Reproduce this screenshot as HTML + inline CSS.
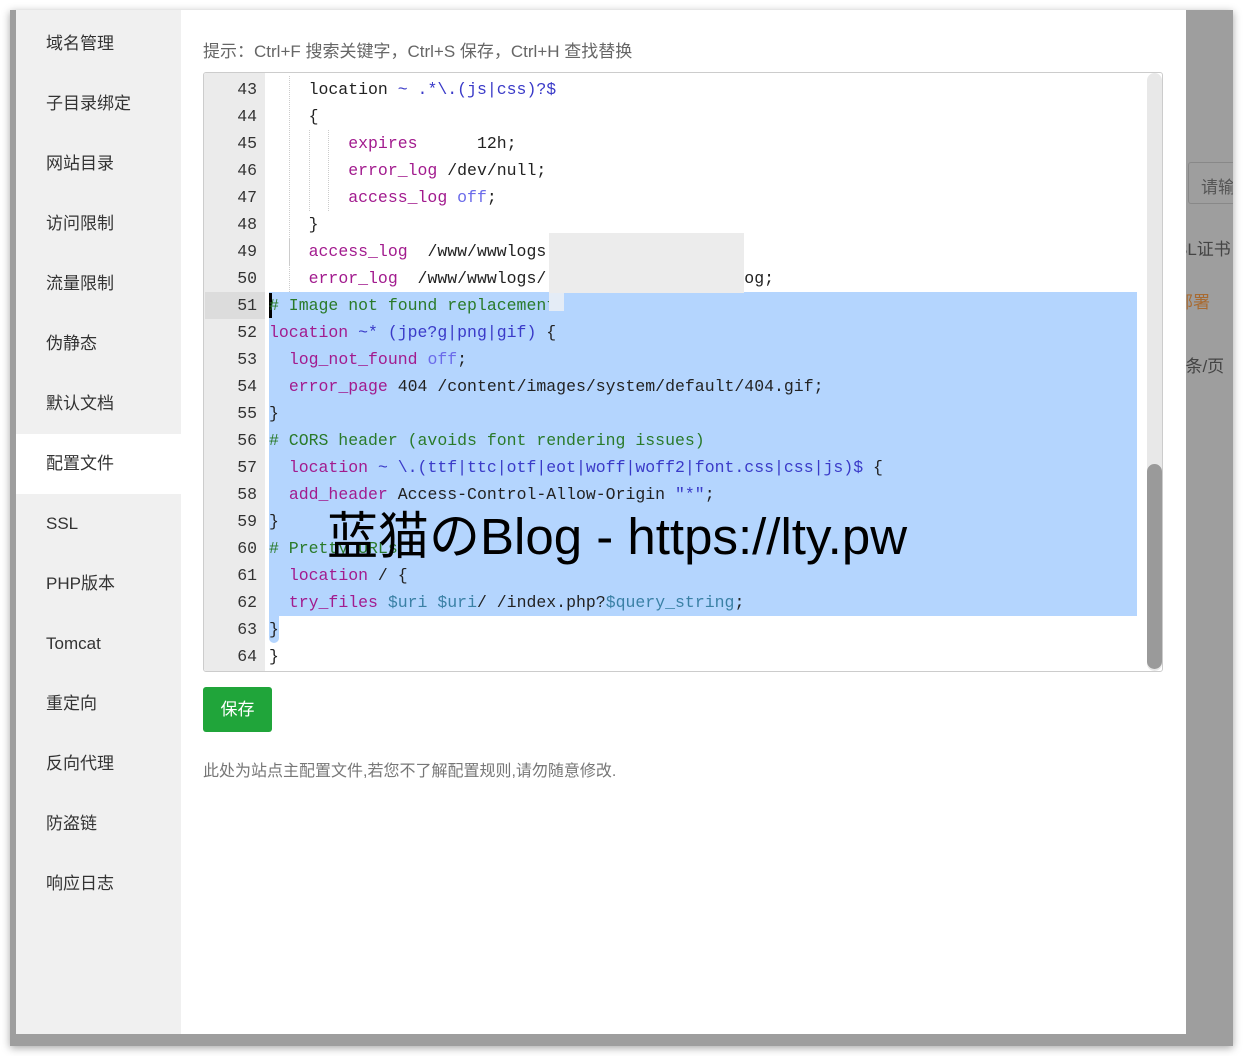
<!DOCTYPE html><html><head><meta charset="utf-8"><style>
*{margin:0;padding:0;box-sizing:border-box}
body{width:1243px;height:1056px;background:#fff;position:relative;overflow:hidden;font-family:"Liberation Sans","Noto Sans CJK SC",sans-serif}
.scr{position:absolute;left:10px;top:10px;width:1223px;height:1036px;background:#9e9e9e;box-shadow:0 2px 8px rgba(0,0,0,.35);overflow:hidden}
.dlg{position:absolute;left:16px;top:10px;width:1170px;height:1024px;background:#fff}
.side{position:absolute;left:0;top:0;width:165px;height:1024px;background:#f0f0f0;padding-top:4px}
.side div{height:60px;line-height:60px;padding-left:30px;font-size:17px;color:#333}
.side div.on{background:#fff}
.hint{position:absolute;left:203px;top:37px;font-size:17px;color:#666}
.ed{position:absolute;left:203px;top:72px;width:960px;height:600px;border:1px solid #ccc;border-radius:3px;overflow:hidden;background:#fff}
.gut{position:absolute;left:0;top:0;width:61px;height:100%;background:#ebebeb}
.ln{position:absolute;left:0;width:53px;text-align:right;font:16.5px/27px "Liberation Mono",monospace;color:#333}
.code{position:absolute;left:65px;top:3px;font:16.5px/27px "Liberation Mono",monospace;color:#222;white-space:pre}
.sel{position:absolute;left:65px;top:219px;width:868px;height:324px;background:#b4d5fe}
.k{color:#a21b8e}.b{color:#3a3ac8}.o{color:#6b6bea}.c{color:#2a7a2a}.v{color:#3a80a5}
.sb{position:absolute;left:943px;top:0;width:15px;height:598px;background:#e8e8e8;border-radius:8px}
.th{position:absolute;left:943px;top:391px;width:15px;height:205px;background:#9a9a9a;border-radius:8px}
.btn{position:absolute;left:203px;top:687px;width:69px;height:45px;background:#20a53a;border-radius:3px;color:#fff;font-size:17px;line-height:45px;text-align:center}
.note{position:absolute;left:203px;top:757px;font-size:16px;color:#777}
.wm{position:absolute;left:327px;top:495px;font-size:51px;color:#000;font-family:"Liberation Sans","Noto Sans CJK JP",sans-serif;white-space:nowrap}
.rt{position:absolute;color:#444;font-size:17px;white-space:nowrap}
</style></head><body>
<div class="scr">
<div class="rt" style="left:1178px;top:152px;width:60px;height:42px;border:1px solid #888;border-radius:3px;padding:10px 12px;color:#555">请输</div>
<div class="rt" style="left:1166px;top:225px">SL证书</div>
<div class="rt" style="left:1166px;top:278px;color:#a86a30">部署</div>
<div class="rt" style="left:1166px;top:342px">0条/页</div>
</div>
<div class="dlg">
<div class="side">
<div>域名管理</div><div>子目录绑定</div><div>网站目录</div><div>访问限制</div><div>流量限制</div><div>伪静态</div><div>默认文档</div><div class="on">配置文件</div><div>SSL</div><div>PHP版本</div><div>Tomcat</div><div>重定向</div><div>反向代理</div><div>防盗链</div><div>响应日志</div>
</div>
</div>
<div class="hint">提示：Ctrl+F 搜索关键字，Ctrl+S 保存，Ctrl+H 查找替换</div>
<div class="ed">
<div class="gut"></div>
<div style="position:absolute;left:1px;top:219px;width:60px;height:27px;background:#dcdcdc"></div>
<div class="sel"></div>
<div style="position:absolute;left:65px;top:543px;width:10px;height:27px;background:#b4d5fe;border-radius:0 0 5px 5px"></div>
<div style="position:absolute;left:65px;top:220px;width:3px;height:25px;background:#000"></div>
<div style="position:absolute;left:85px;top:3px;height:189px;border-left:1px dotted #ccc"></div>
<div style="position:absolute;left:85px;top:165px;height:54px;border-left:1px dotted #ccc"></div>
<div style="position:absolute;left:105px;top:57px;height:81px;border-left:1px dotted #ccc"></div>
<div style="position:absolute;left:124px;top:57px;height:81px;border-left:1px dotted #ccc"></div>
<div class="ln" style="top:3px">43<br>44<br>45<br>46<br>47<br>48<br>49<br>50<br>51<br>52<br>53<br>54<br>55<br>56<br>57<br>58<br>59<br>60<br>61<br>62<br>63<br>64</div>
<div class="code">    location <span class="b">~ .*\.(js|css)?$</span>
    {
        <span class="k">expires</span>      12h;
        <span class="k">error_log</span> /dev/null;
        <span class="k">access_log</span> <span class="o">off</span>;
    }
    <span class="k">access_log</span>  /www/wwwlogs
    <span class="k">error_log</span>  /www/wwwlogs/                  .log;
<span class="c"># Image not found replacement</span>
<span class="k">location</span> <span class="b">~* (jpe?g|png|gif)</span> {
  <span class="k">log_not_found</span> <span class="o">off</span>;
  <span class="k">error_page</span> 404 /content/images/system/default/404.gif;
}
<span class="c"># CORS header (avoids font rendering issues)</span>
  <span class="k">location</span> <span class="b">~ \.(ttf|ttc|otf|eot|woff|woff2|font.css|css|js)$</span> {
  <span class="k">add_header</span> Access-Control-Allow-Origin <span class="b">"*"</span>;
}
<span class="c"># Pretty URLs</span>
  <span class="k">location</span> / {
  <span class="k">try_files</span> <span class="v">$uri</span> <span class="v">$uri</span>/ /index.php?<span class="v">$query_string</span>;
}
}</div>
<div style="position:absolute;left:345px;top:160px;width:195px;height:60px;background:#ececec"></div>
<div style="position:absolute;left:345px;top:220px;width:15px;height:18px;background:#e4ecf6"></div>
<div class="sb"></div><div class="th"></div>
</div>
<div class="btn">保存</div>
<div class="note">此处为站点主配置文件,若您不了解配置规则,请勿随意修改.</div>
<div class="wm">蓝猫のBlog - https://lty.pw</div>
</body></html>
